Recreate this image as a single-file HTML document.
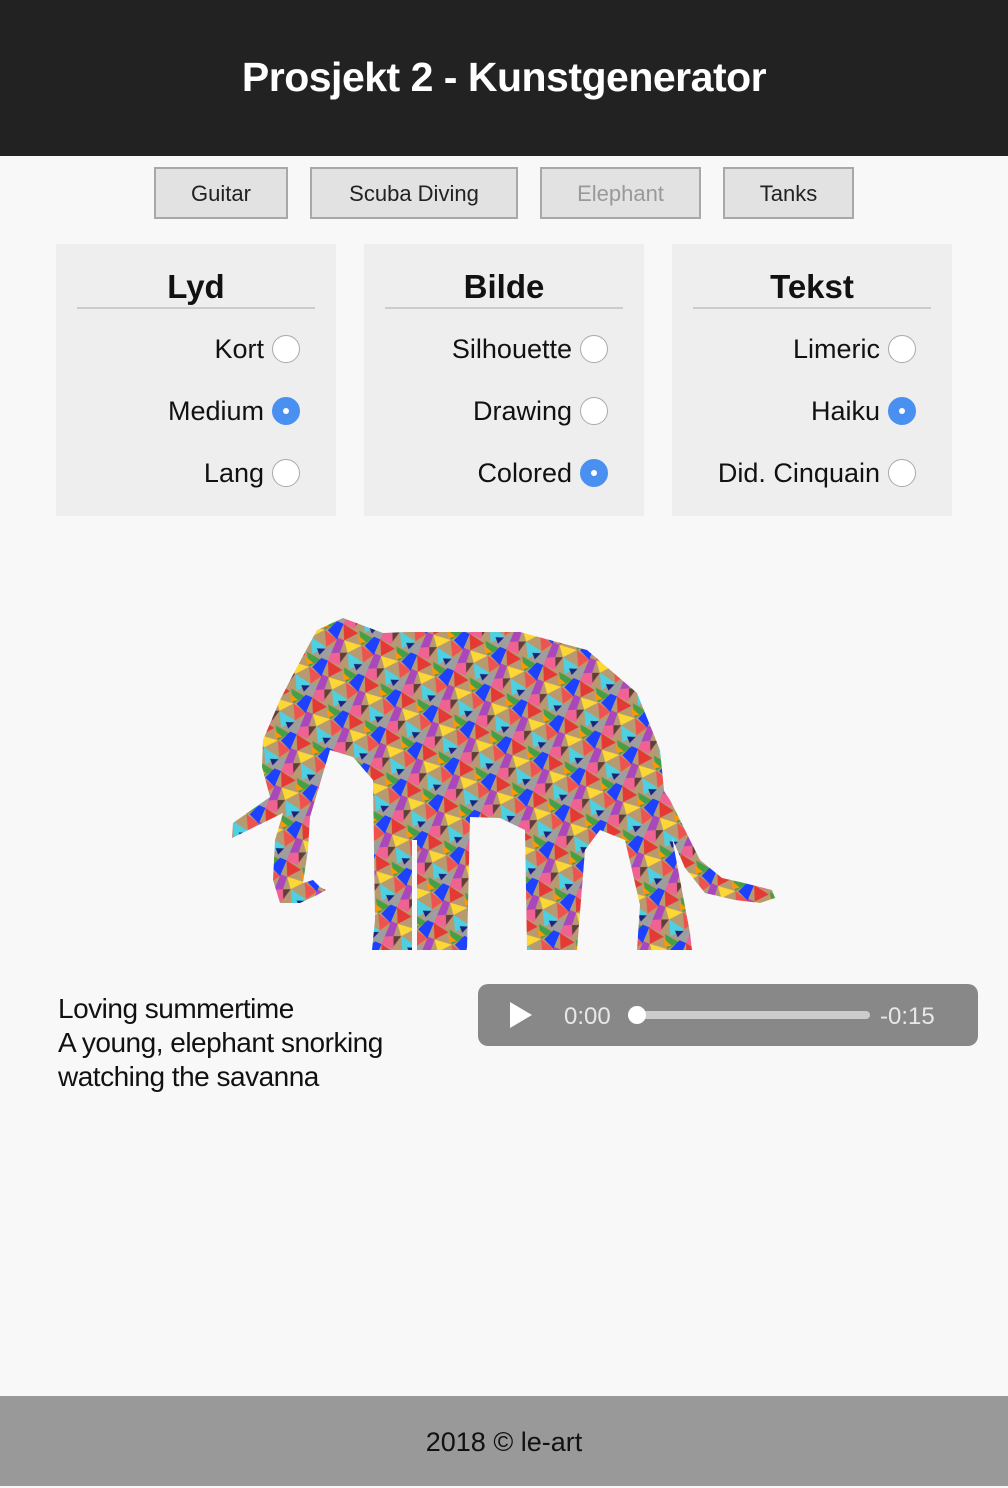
<!DOCTYPE html>
<html><head><meta charset="utf-8"><style>
*{margin:0;padding:0;box-sizing:border-box}
body{width:1008px;height:1486px;background:#f8f8f8;font-family:"Liberation Sans",sans-serif;position:relative;overflow:hidden;color:#111}
.hdr{position:absolute;left:0;top:0;width:1008px;height:156px;background:#222;color:#fff;font-size:41px;font-weight:bold;text-align:center;line-height:154px;letter-spacing:-0.5px}
.btn{position:absolute;top:167px;height:52px;background:#e2e2e2;border:2px solid #a8a8a8;font-size:22px;text-align:center;line-height:50px;color:#222}
.pan{position:absolute;top:244px;width:280px;height:272px;background:#eee}
.pan h2{position:absolute;left:21px;width:238px;top:22px;height:43px;border-bottom:2px solid #ccc;text-align:center;font-size:33px;line-height:42px}
.row{position:absolute;right:36px;font-size:27px;height:30px;line-height:30px;display:flex;align-items:center}
.r{width:28px;height:28px;border-radius:50%;border:1.5px solid #aaa;background:#fff;margin-left:8px;display:inline-block}
.r.on{background:#4a90f0;border-color:#4a90f0;position:relative}
.r.on:after{content:"";position:absolute;left:9.5px;top:9.5px;width:6px;height:6px;border-radius:50%;background:#fff}
.txt{position:absolute;left:58px;top:992px;font-size:28px;line-height:34px;letter-spacing:-0.5px}
.aud{position:absolute;left:478px;top:984px;width:500px;height:62px;background:#888;border-radius:10px}
.ftr{position:absolute;left:0;top:1396px;width:1008px;height:90px;background:#999;text-align:center;font-size:27px;line-height:92px}
</style></head><body>
<div class="hdr">Prosjekt 2 - Kunstgenerator</div>
<div class="btn" style="left:154px;width:134px">Guitar</div>
<div class="btn" style="left:310px;width:208px">Scuba Diving</div>
<div class="btn" style="left:540px;width:161px;color:#999">Elephant</div>
<div class="btn" style="left:723px;width:131px">Tanks</div>

<div class="pan" style="left:56px"><h2>Lyd</h2>
<div class="row" style="top:90px">Kort<span class="r"></span></div>
<div class="row" style="top:152px">Medium<span class="r on"></span></div>
<div class="row" style="top:214px">Lang<span class="r"></span></div></div>
<div class="pan" style="left:364px"><h2>Bilde</h2>
<div class="row" style="top:90px">Silhouette<span class="r"></span></div>
<div class="row" style="top:152px">Drawing<span class="r"></span></div>
<div class="row" style="top:214px">Colored<span class="r on"></span></div></div>
<div class="pan" style="left:672px"><h2>Tekst</h2>
<div class="row" style="top:90px">Limeric<span class="r"></span></div>
<div class="row" style="top:152px">Haiku<span class="r on"></span></div>
<div class="row" style="top:214px">Did. Cinquain<span class="r"></span></div></div>

<svg style="position:absolute;left:0;top:0" width="1008" height="1486">
<defs>
<pattern id="p" width="40" height="40" patternUnits="userSpaceOnUse" patternTransform="rotate(23)">
<rect width="40" height="40" fill="#b89a70"/>
<polygon points="0,0 17,3 7,15" fill="#e53935"/>
<polygon points="17,0 33,2 25,13" fill="#43a047"/>
<polygon points="33,0 40,0 40,17 28,12" fill="#1e40ff"/>
<polygon points="7,15 25,13 15,25" fill="#fdd835"/>
<polygon points="0,15 7,15 8,28 0,32" fill="#ab47bc"/>
<polygon points="25,13 40,17 33,28" fill="#ef5350"/>
<polygon points="15,25 33,28 23,40" fill="#4dd0e1"/>
<polygon points="0,32 15,25 12,40 0,40" fill="#f06292"/>
<polygon points="33,28 40,25 40,40 25,40" fill="#9e9e9e"/>
<polygon points="8,28 15,25 12,37" fill="#5d4037"/>
<polygon points="18,5 28,8 22,12" fill="#ff9800"/>
<polygon points="25,33 33,30 30,38" fill="#1a237e"/>
</pattern>
</defs>
<g fill="url(#p)">
<path d="M317,630 L343,618 L383,633 L407,632 L520,632 L587,650 L637,693 L660,750 L665,800 L690,933 L692,950 L637,950 L640,905 L625,840 L600,830 L585,850 L577,950 L527,950 L525,830 L500,818 L470,817 L467,950 L417,950 L417,840 L412,840 L412,950 L372,950 L375,920 L373,780 L353,757 L330,750 L310,817 L308,850 L303,883 L313,880 L320,887 L326,890 L317,895 L300,903 L280,903 L273,880 L275,840 L283,813 L232,838 L233,823 L270,797 L262,767 L263,740 L280,700 L297,667 Z"/>
<path d="M660,785 L670,800 L700,860 L722,878 L740,882 L772,890 L775,898 L760,903 L735,900 L705,893 L685,868 L662,815 Z"/>
</g>
</svg>

<div class="txt">Loving summertime<br>A young, elephant snorking<br>watching the savanna</div>
<div class="aud">
<svg width="500" height="62" style="position:absolute;left:0;top:0">
<polygon points="32,18 32,44 54,31" fill="#fff"/>
<text x="86" y="40" font-family="Liberation Sans,sans-serif" font-size="24" fill="#e8e8e8">0:00</text>
<rect x="152" y="27" width="240" height="8" rx="4" fill="#ccc"/>
<circle cx="159" cy="31" r="9" fill="#fff"/>
<text x="402" y="40" font-family="Liberation Sans,sans-serif" font-size="24" fill="#e8e8e8">-0:15</text>
</svg></div>
<div class="ftr">2018 © le-art</div>
</body></html>
